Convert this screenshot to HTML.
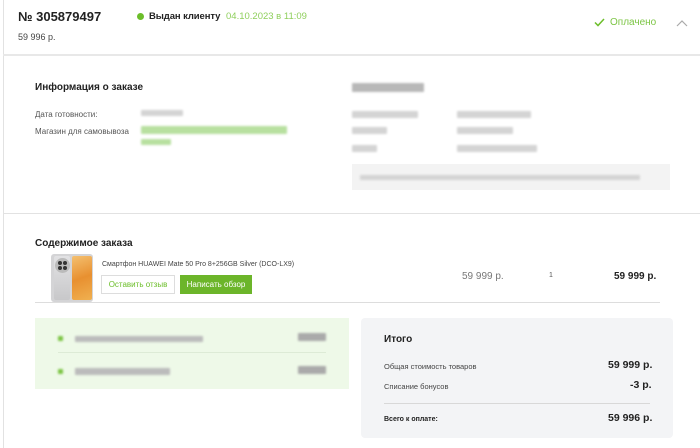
<!DOCTYPE html>
<html><head><meta charset="utf-8"><style>
*{margin:0;padding:0;box-sizing:border-box}
body{width:700px;height:448px;overflow:hidden;background:#fff;font-family:"Liberation Sans",Arial,sans-serif;color:#222;position:relative}
.a{position:absolute;white-space:nowrap}
.blur{position:absolute;background:#d4d4d4;border-radius:1px;filter:blur(1px)}
.g{background:#b8e0a0}
</style></head><body>
<div class="a" style="left:3px;top:0;width:1px;height:448px;background:#e2e2e2"></div>
<div class="a" style="left:18px;top:9px;font-size:13px;font-weight:bold;color:#222">№ 305879497</div>
<div class="a" style="left:18px;top:32px;font-size:9px;color:#444">59 996 р.</div>
<div class="a" style="left:137px;top:13px;width:7px;height:7px;border-radius:50%;background:#6cbe2a"></div>
<div class="a" style="left:149px;top:11px;font-size:9.5px;font-weight:bold;color:#222;letter-spacing:-0.1px">Выдан клиенту</div>
<div class="a" style="left:226px;top:11px;font-size:9.5px;color:#8fcf5c">04.10.2023 в 11:09</div>
<svg class="a" style="left:594px;top:18px" width="11" height="9" viewBox="0 0 11 9"><path d="M1 4.5L4 7.5L10 1" fill="none" stroke="#6cbe2a" stroke-width="1.5"/></svg>
<div class="a" style="left:610px;top:17px;font-size:10px;color:#7cc544">Оплачено</div>
<svg class="a" style="left:676px;top:19px" width="12" height="8" viewBox="0 0 12 8"><path d="M1 7L6 2L11 7" fill="none" stroke="#aaa" stroke-width="1.2"/></svg>
<div class="a" style="left:3px;top:54px;width:697px;height:2px;background:#e8e8e8"></div>

<div class="a" style="left:35px;top:82px;font-size:10px;font-weight:bold">Информация о заказе</div>
<div class="a" style="left:35px;top:110px;font-size:8px;color:#555">Дата готовности:</div>
<div class="a" style="left:35px;top:127px;font-size:8px;color:#555">Магазин для самовывоза</div>
<div class="blur" style="left:141px;top:110px;width:42px;height:6px"></div>
<div class="blur g" style="left:141px;top:126px;width:146px;height:8px"></div>
<div class="blur g" style="left:141px;top:139px;width:30px;height:6px"></div>
<div class="blur" style="left:352px;top:83px;width:72px;height:9px;background:#b8b8b8"></div>
<div class="blur" style="left:352px;top:111px;width:66px;height:7px"></div>
<div class="blur" style="left:457px;top:111px;width:74px;height:7px"></div>
<div class="blur" style="left:352px;top:127px;width:35px;height:7px"></div>
<div class="blur" style="left:457px;top:127px;width:56px;height:7px"></div>
<div class="blur" style="left:352px;top:145px;width:25px;height:7px"></div>
<div class="blur" style="left:457px;top:145px;width:80px;height:7px"></div>
<div class="a" style="left:352px;top:164px;width:318px;height:26px;background:#f3f3f3"></div>
<div class="blur" style="left:360px;top:175px;width:280px;height:5px"></div>
<div class="a" style="left:3px;top:213px;width:697px;height:1px;background:#e2e2e2"></div>

<div class="a" style="left:35px;top:238px;font-size:10px;font-weight:bold">Содержимое заказа</div>
<div class="a" style="left:51px;top:254px;width:42px;height:48px;border-radius:3px;background:#d4d4d6"></div>
<div class="a" style="left:54px;top:256px;width:16px;height:44px;border-radius:2px;background:linear-gradient(#e2e2e4,#c8c8ca)"></div>
<div class="a" style="left:72px;top:256px;width:20px;height:44px;border-radius:2px;background:linear-gradient(160deg,#f4c070,#e89030 50%,#f0b050)"></div>
<div class="a" style="left:55px;top:258px;width:15px;height:15px;border-radius:50%;background:#bbb"></div>
<div class="a" style="left:58px;top:261px;width:4px;height:4px;border-radius:50%;background:#333;box-shadow:5px 0 #333,0 5px #333,5px 5px #333"></div>
<div class="a" style="left:102px;top:261px;font-size:7px;color:#444">Смартфон HUAWEI Mate 50 Pro 8+256GB Silver (DCO-LX9)</div>
<div class="a" style="left:101px;top:275px;width:74px;height:19px;border:1px solid #ddd;font-size:8px;color:#6cbe2a;text-align:center;line-height:17px">Оставить отзыв</div>
<div class="a" style="left:180px;top:275px;width:72px;height:19px;background:#6cb52a;font-size:8px;color:#fff;text-align:center;line-height:19px">Написать обзор</div>
<div class="a" style="left:462px;top:271px;font-size:10px;color:#777">59 999 р.</div>
<div class="a" style="left:549px;top:272px;font-size:7px;color:#555">1</div>
<div class="a" style="left:614px;top:271px;font-size:10px;font-weight:bold;color:#222">59 999 р.</div>
<div class="a" style="left:35px;top:302px;width:625px;height:1px;background:#ddd"></div>

<div class="a" style="left:35px;top:318px;width:314px;height:71px;background:#eef9e8"></div>
<div class="blur" style="left:58px;top:336px;width:5px;height:5px;background:#7cc544"></div>
<div class="blur" style="left:75px;top:336px;width:128px;height:6px;background:#bbb"></div>
<div class="blur" style="left:298px;top:333px;width:28px;height:8px;background:#aaa"></div>
<div class="a" style="left:58px;top:352px;width:268px;height:1px;background:#ddebd6"></div>
<div class="blur" style="left:58px;top:369px;width:5px;height:5px;background:#7cc544"></div>
<div class="blur" style="left:75px;top:368px;width:95px;height:7px;background:#bbb"></div>
<div class="blur" style="left:298px;top:366px;width:28px;height:8px;background:#aaa"></div>

<div class="a" style="left:361px;top:318px;width:312px;height:120px;background:#f3f4f6;border-radius:4px"></div>
<div class="a" style="left:384px;top:334px;font-size:10px;font-weight:bold">Итого</div>
<div class="a" style="left:384px;top:362px;font-size:7.5px;color:#444">Общая стоимость товаров</div>
<div class="a" style="left:608px;top:359px;font-size:10.5px;font-weight:bold">59 999 р.</div>
<div class="a" style="left:384px;top:382px;font-size:7.5px;color:#444">Списание бонусов</div>
<div class="a" style="left:630px;top:379px;font-size:10.5px;font-weight:bold">-3 р.</div>
<div class="a" style="left:384px;top:403px;width:266px;height:1px;background:#d8d8d8"></div>
<div class="a" style="left:384px;top:416px;font-size:7px;font-weight:bold">Всего к оплате:</div>
<div class="a" style="left:608px;top:412px;font-size:10.5px;font-weight:bold">59 996 р.</div>
</body></html>
